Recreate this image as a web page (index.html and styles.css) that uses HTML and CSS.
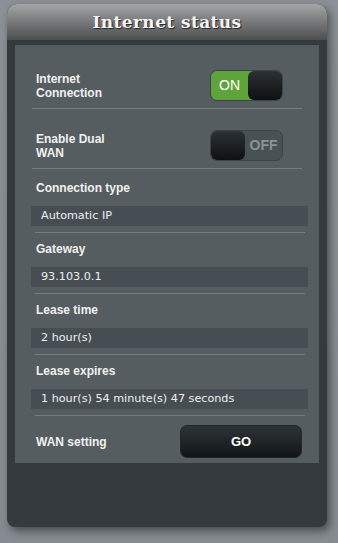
FILE: index.html
```html
<!DOCTYPE html>
<html lang="en">
<head>
    <meta charset="UTF-8">
    <meta name="viewport" content="width=device-width, initial-scale=1.0">
    <title>Internet status</title>
    <link rel="stylesheet" href="styles.css">
</head>
<body>
    <div class="card">
        <header class="card-head">
            <h1>Internet status</h1>
        </header>

        <section class="panel">
            <div class="switch-row first">
                <span class="label">Internet<br>Connection</span>
                <div class="toggle on">
                    <span class="state">ON</span>
                    <span class="knob"></span>
                </div>
            </div>

            <div class="switch-row">
                <span class="label">Enable Dual<br>WAN</span>
                <div class="toggle off">
                    <span class="knob"></span>
                    <span class="state">OFF</span>
                </div>
            </div>

            <div class="info-row first">
                <div class="label">Connection type</div>
                <div class="value">Automatic IP</div>
            </div>

            <div class="info-row">
                <div class="label">Gateway</div>
                <div class="value">93.103.0.1</div>
            </div>

            <div class="info-row">
                <div class="label">Lease time</div>
                <div class="value">2 hour(s)</div>
            </div>

            <div class="info-row">
                <div class="label">Lease expires</div>
                <div class="value">1 hour(s) 54 minute(s) 47 seconds</div>
            </div>

            <div class="go-row">
                <span class="label">WAN setting</span>
                <button type="button" class="go-btn">GO</button>
            </div>
        </section>
    </div>
</body>
</html>
```

FILE: styles.css
```css
body {
    margin: 0;
    padding: 0;
    height: 543px;
    background: linear-gradient(#8b9196, #858b90);
    font-family: "Liberation Sans", Arial, sans-serif;
    overflow: hidden;
}
.card {
    margin: 4px 0 0 7px;
    width: 320px;
    height: 523px;
    background-color: #343a3d;
    border-radius: 10px 10px 8px 8px;
    box-shadow: 3px 4px 8px rgba(0, 0, 0, 0.45);
}
.card-head {
    height: 36px;
    border-radius: 10px 10px 0 0;
    background: linear-gradient(#a3a5a6, #7b7d7e 45%, #4c4f50);
    display: flex;
    align-items: center;
    justify-content: center;
}
.card-head h1 {
    margin: 0;
    font-family: "DejaVu Serif", serif;
    font-size: 17px;
    font-weight: bold;
    letter-spacing: 0.4px;
    color: #f4f4f4;
    text-shadow: 1px 1px 1px #222;
}
.panel {
    margin: 5px 8px 0 8px;
    background-color: #565d60;
}
.label {
    color: #f0f0f0;
    font-size: 12px;
    font-weight: bold;
    line-height: 14px;
}
.switch-row {
    display: flex;
    align-items: center;
    justify-content: space-between;
    margin: 0 17px 0 17px;
    padding: 21px 19px 7px 4px;
    border-bottom: 1px solid #757c7f;
}
.switch-row.first {
    padding-top: 25px;
}
.toggle {
    width: 71px;
    height: 29px;
    border: 1px solid #3d4346;
    border-radius: 7px;
    background-color: #4a5154;
    display: flex;
    overflow: hidden;
}
.toggle .knob {
    width: 34px;
    border-radius: 6px;
    background: linear-gradient(#2b3134, #0e1113);
}
.toggle .state {
    flex: 1;
    font-size: 14px;
    line-height: 29px;
    text-align: center;
}
.toggle.on .state {
    background-color: #5ea43a;
    color: #ffffff;
    margin-right: -6px;
    padding-right: 6px;
}
.toggle.on .knob {
    position: relative;
}
.toggle.off .state {
    color: #8b9294;
    font-weight: bold;
}
.info-row {
    margin: 0 0 0 16px;
    padding-top: 9px;
}
.info-row.first {
    padding-top: 12px;
}
.info-row .label {
    margin-left: 5px;
}
.info-row .value {
    margin: 11px 11px 0 0;
    height: 20px;
    line-height: 20px;
    padding-left: 10px;
    background-color: #474e53;
    color: #eeeeee;
    font-family: "DejaVu Sans", Tahoma, sans-serif;
    font-size: 11.2px;
}
.info-row::after {
    content: "";
    display: block;
    margin: 6px 14px 0 4px;
    border-bottom: 1px solid #757c7f;
}
.go-row {
    display: flex;
    align-items: center;
    justify-content: space-between;
    padding: 9px 17px 5px 21px;
}
.go-btn {
    width: 122px;
    height: 33px;
    border: 1px solid #222829;
    border-radius: 7px;
    background: linear-gradient(#2d3437, #121517);
    color: #ffffff;
    font-family: "Liberation Sans", Arial, sans-serif;
    font-size: 13px;
    font-weight: bold;
}
```
